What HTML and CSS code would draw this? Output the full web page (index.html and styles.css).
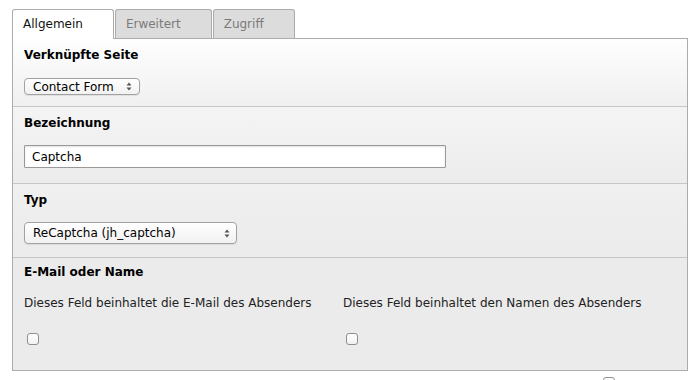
FILE: index.html
```html
<!DOCTYPE html>
<html lang="de">
<head>
  <meta charset="UTF-8">
  <title>Formularfeld bearbeiten</title>
  <link rel="stylesheet" href="styles.css">
</head>
<body>
  <ul class="tabs">
    <li class="tab active">Allgemein</li>
    <li class="tab">Erweitert</li>
    <li class="tab">Zugriff</li>
  </ul>

  <div class="panel">
    <div class="section">
      <h2>Verknüpfte Seite</h2>
      <div class="select select-page">
        <span>Contact Form</span>
        <svg width="6" height="9" viewBox="0 0 6 9"><path d="M3 0.5 L5.5 3.5 H0.5 Z M3 8.5 L5.5 5.5 H0.5 Z" fill="#555"/></svg>
      </div>
    </div>

    <div class="section">
      <h2>Bezeichnung</h2>
      <input class="text" type="text" value="Captcha">
    </div>

    <div class="section">
      <h2>Typ</h2>
      <div class="select select-type">
        <span>ReCaptcha (jh_captcha)</span>
        <svg width="6" height="9" viewBox="0 0 6 9"><path d="M3 0.5 L5.5 3.5 H0.5 Z M3 8.5 L5.5 5.5 H0.5 Z" fill="#555"/></svg>
      </div>
    </div>

    <div class="section last">
      <h2>E-Mail oder Name</h2>
      <div class="cols">
        <div class="col">
          <label>Dieses Feld beinhaltet die E-Mail des Absenders</label>
          <span class="check"></span>
        </div>
        <div class="col">
          <label>Dieses Feld beinhaltet den Namen des Absenders</label>
          <span class="check"></span>
        </div>
      </div>
    </div>
  </div>

  <div class="footer">
    <span class="check small"></span>
  </div>
</body>
</html>
```

FILE: styles.css
```css
body {
  margin: 0;
  background: #fff;
  color: #000;
  font-family: "DejaVu Sans", Verdana, sans-serif;
  font-size: 12px;
  overflow: hidden;
}
.tabs {
  display: flex;
  list-style: none;
  margin: 0 0 0 12px;
  padding: 9px 0 0 0;
}
.tab {
  height: 28px;
  line-height: 29px;
  padding: 0 30px 0 10px;
  border: 1px solid #acacac;
  border-bottom: none;
  border-radius: 3px 3px 0 0;
  background: #dcdcdc;
  color: #7a7a7a;
  font-size: 12px;
}
.tab + .tab { margin-left: 1px; }
.tab.active {
  background: #fff;
  color: #111;
  position: relative;
  margin-bottom: -1px;
  height: 29px;
  z-index: 1;
}
.panel {
  margin: 0 12px;
  border: 1px solid #acacac;
}
.section {
  padding: 8px 11px 11px 11px;
  border-bottom: 1px solid #c6c6c6;
  background: linear-gradient(#fefefe, #f0f0f0);
}
.section:nth-child(2) { padding-bottom: 15px; background: linear-gradient(#f4f4f4, #ececec); }
.section:nth-child(3) { padding-bottom: 13px; background: linear-gradient(#f0f0f0, #ebebeb); }
.section.last {
  border-bottom: none;
  padding: 6px 11px 25px 11px;
  background: #ebebeb;
}
h2 {
  margin: 0;
  font-size: 12px;
  line-height: 16px;
  font-weight: bold;
}
.select {
  display: flex;
  align-items: center;
  justify-content: space-between;
  box-sizing: border-box;
  margin-top: 15px;
  padding: 0 7px 0 8px;
  border: 1px solid #a2a2a2;
  border-radius: 4px;
  background: linear-gradient(#fff, #f1f1f1);
  box-shadow: 0 1px 1px rgba(0,0,0,0.08);
  font-size: 12px;
}
.select-page { width: 116px; height: 17px; }
.select-type { width: 213px; height: 22px; margin-top: 14px; padding-right: 6px; }
.text {
  display: block;
  box-sizing: border-box;
  width: 422px;
  height: 23px;
  margin: 14px 0 0 0;
  padding: 0 7px;
  border: 1px solid #999;
  border-radius: 1px;
  box-shadow: inset 0 1px 2px rgba(0,0,0,0.12);
  background: #fff;
  font-family: "DejaVu Sans", Verdana, sans-serif;
  font-size: 12px;
  color: #000;
}
.cols {
  display: grid;
  grid-template-columns: 319px 1fr;
  margin-top: 15px;
}
.col label {
  display: block;
  line-height: 16px;
  color: #222;
}
.check {
  display: block;
  width: 10px;
  height: 10px;
  margin: 22px 0 0 3px;
  border: 1px solid #8f8f8f;
  border-radius: 3px;
  background: linear-gradient(#fff, #f2f2f2);
}
.footer {
  padding: 6px 0 0 603px;
}
.check.small {
  margin: 0;
}
```
